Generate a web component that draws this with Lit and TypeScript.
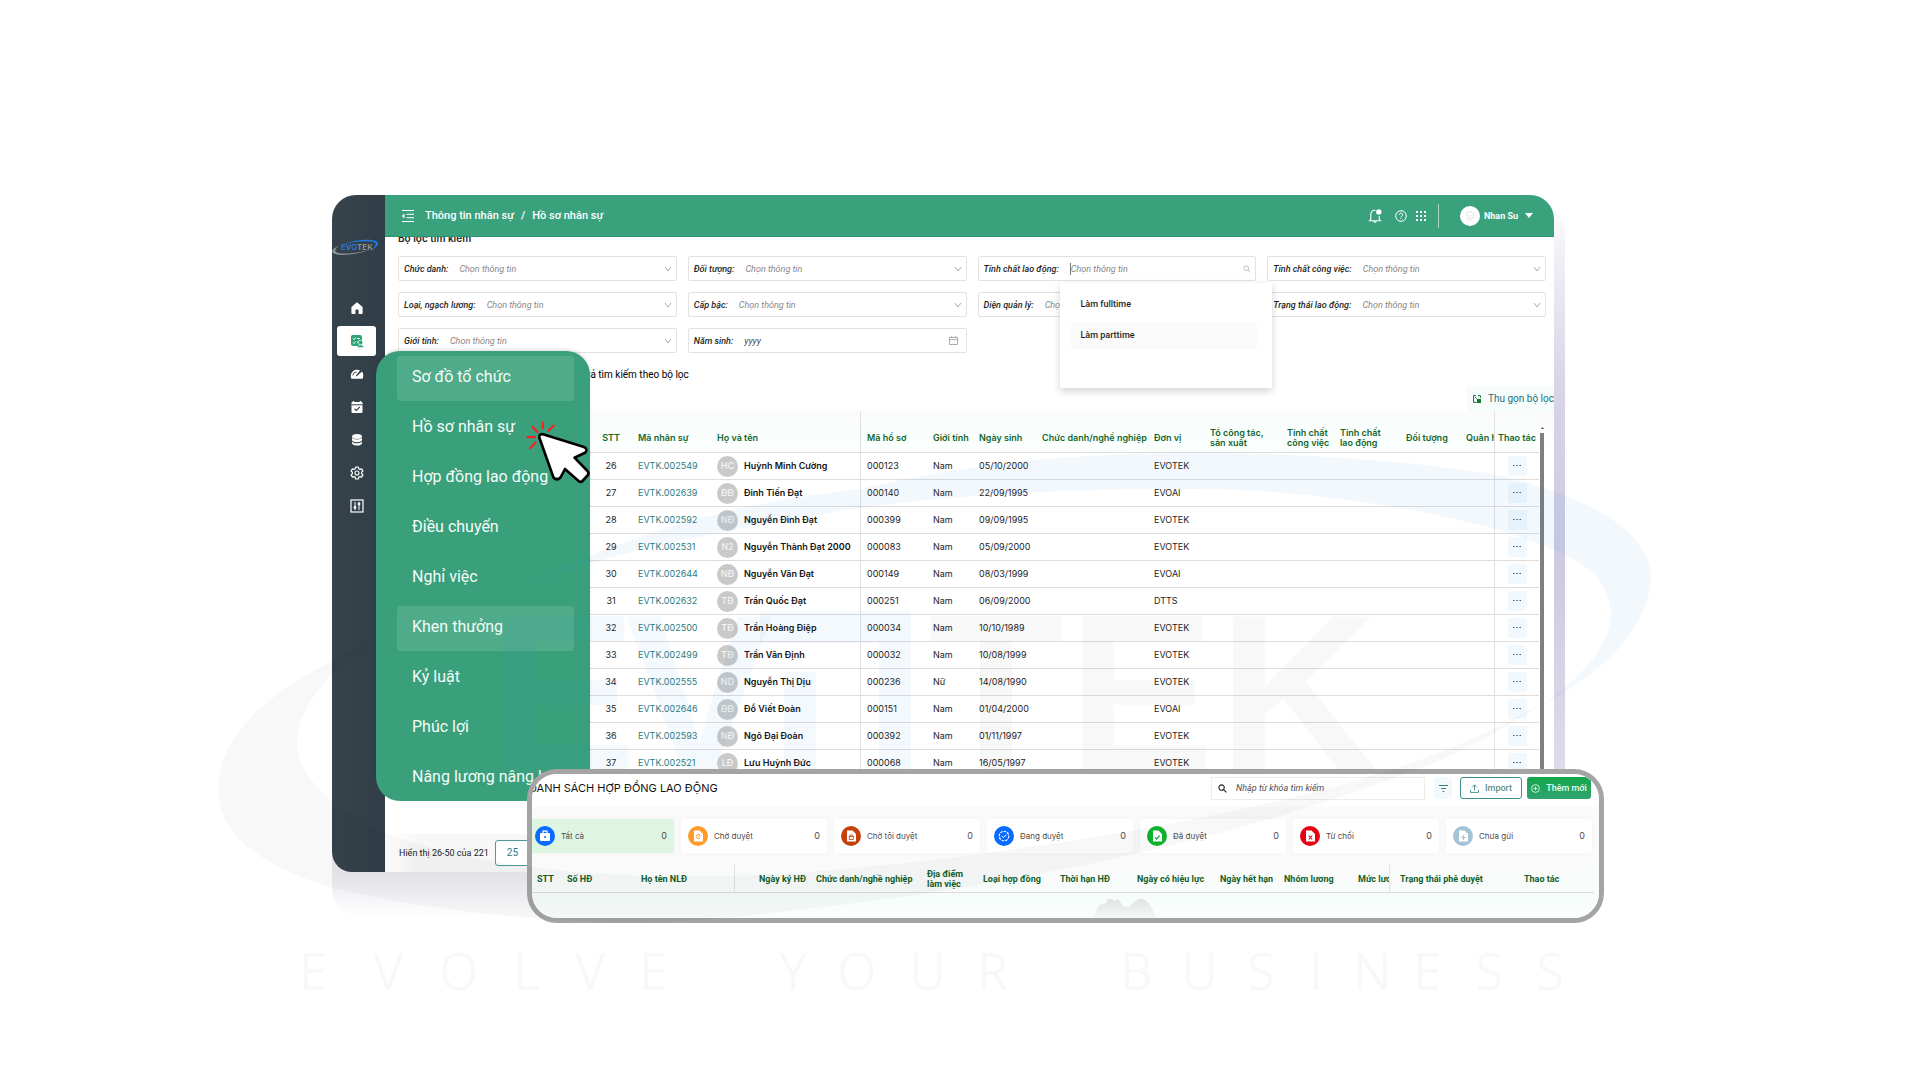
import { LitElement, html, svg, css, nothing, TemplateResult } from "lit";
import { customElement } from "lit/decorators.js";
import { classMap } from "lit/directives/class-map.js";

interface Employee {
  no: number;
  code: string;
  initials: string;
  name: string;
  file: string;
  sex: string;
  born: string;
  unit: string;
}

const EMPLOYEES: Employee[] = [
  { no: 26, code: "EVTK.002549", initials: "HC", name: "Huỳnh Minh Cường", file: "000123", sex: "Nam", born: "05/10/2000", unit: "EVOTEK" },
  { no: 27, code: "EVTK.002639", initials: "ĐĐ", name: "Đinh Tiến Đạt", file: "000140", sex: "Nam", born: "22/09/1995", unit: "EVOAI" },
  { no: 28, code: "EVTK.002592", initials: "NĐ", name: "Nguyễn Đình Đạt", file: "000399", sex: "Nam", born: "09/09/1995", unit: "EVOTEK" },
  { no: 29, code: "EVTK.002531", initials: "N2", name: "Nguyễn Thành Đạt 2000", file: "000083", sex: "Nam", born: "05/09/2000", unit: "EVOTEK" },
  { no: 30, code: "EVTK.002644", initials: "NĐ", name: "Nguyễn Văn Đạt", file: "000149", sex: "Nam", born: "08/03/1999", unit: "EVOAI" },
  { no: 31, code: "EVTK.002632", initials: "TĐ", name: "Trần Quốc Đạt", file: "000251", sex: "Nam", born: "06/09/2000", unit: "DTTS" },
  { no: 32, code: "EVTK.002500", initials: "TĐ", name: "Trần Hoàng Điệp", file: "000034", sex: "Nam", born: "10/10/1989", unit: "EVOTEK" },
  { no: 33, code: "EVTK.002499", initials: "TĐ", name: "Trần Văn Định", file: "000032", sex: "Nam", born: "10/08/1999", unit: "EVOTEK" },
  { no: 34, code: "EVTK.002555", initials: "ND", name: "Nguyễn Thị Dịu", file: "000236", sex: "Nữ", born: "14/08/1990", unit: "EVOTEK" },
  { no: 35, code: "EVTK.002646", initials: "ĐĐ", name: "Đỗ Viết Đoàn", file: "000151", sex: "Nam", born: "01/04/2000", unit: "EVOAI" },
  { no: 36, code: "EVTK.002593", initials: "NĐ", name: "Ngô Đại Đoàn", file: "000392", sex: "Nam", born: "01/11/1997", unit: "EVOTEK" },
  { no: 37, code: "EVTK.002521", initials: "LĐ", name: "Lưu Huỳnh Đức", file: "000068", sex: "Nam", born: "16/05/1997", unit: "EVOTEK" },
];

/* ---------- icons ---------- */

const chevron = html`<svg class="chev" viewBox="0 0 8 8" aria-hidden="true"><path d="M1 2l3 4 3-4" fill="none" stroke="#a9a9a9" stroke-width="1"/></svg>`;
const lens = (color: string, w: number) => html`<svg class="lens" viewBox="0 0 10 10" aria-hidden="true"><circle cx="4" cy="4" r="3" fill="none" stroke=${color} stroke-width=${w}/><path d="M6.3 6.3L9.3 9.3" stroke=${color} stroke-width=${w}/></svg>`;

const ICONS: Record<string, TemplateResult> = {
  home: svg`<path d="M7 1.2L1.4 6v6.2c0 .5.3.8.8.8H5.400V9.300c0-.4.3-.7.7-.7h1.800c.4 0 .7.3.7.7V13h3.200c.5 0 .8-.3.8-.8V6z" fill="#fff"/>`,
  gauge: svg`<path d="M1 11a6 6 0 0 1-.2-2C1 5.500 3.600 2.800 7 2.800c1.200 0 2 .2 3 .7L6.200 8.300 5.600 9.600 7 9l5-4.500c.9 1.200 1.300 2.700 1.200 4.300L13 11q-.2.800-1 .800H2Q1.200 11.800 1 11z" fill="#fff"/><path d="M2.800 8.500a4 4 0 0 1 4-3.600M12.600 2.600L7 8" fill="none" stroke="#344047" stroke-width=".9"/>`,
  calendar: svg`<path d="M3.500 1v2M10.500 1v2" stroke="#fff" stroke-width="1.400"/><rect x="1.500" y="2" width="11" height="11" rx="1" fill="#fff"/><path d="M1.500 4.800h11" stroke="#344047"/><path d="M4.500 8.700l2 1.800 3.200-3.600" fill="none" stroke="#344047" stroke-width="1.200"/>`,
  stack: svg`<ellipse cx="7" cy="3.500" rx="5" ry="2.500" fill="#fff"/><path d="M2 4.800c1 2.200 9 2.200 10 0v2.400c-1 2.600-9 2.600-10 0zM2 8.400c1 2.400 9 2.400 10 0v1.800c-.6 3.200-9.400 3.200-10 0z" fill="#fff"/>`,
  gear: svg`<path d="M5.700 1h2.600l.4 1.700 1.200.7 1.700-.5 1.300 2.200-1.300 1.200v1.400l1.300 1.200-1.300 2.200-1.700-.5-1.200.7L8.300 13H5.700l-.4-1.700-1.200-.7-1.700.5L1.100 8.900l1.300-1.200V6.300L1.100 5.100l1.300-2.200 1.700.5 1.200-.7z" fill="none" stroke="#fff" stroke-width="1.200" stroke-linejoin="round"/><circle cx="7" cy="7" r="2" fill="none" stroke="#fff" stroke-width="1.100"/>`,
  sliders: svg`<rect x="1" y="1" width="12" height="12" fill="none" stroke="#fff" stroke-width="1.200"/><path d="M5 3v8M9 3v8" stroke="#fff" stroke-width="1"/><circle cx="5" cy="8.500" r="1.400" fill="#fff"/><circle cx="9" cy="5" r="1.400" fill="#fff"/>`,
};

const activeIcon = html`<svg class="ico" viewBox="0 0 14 14" aria-hidden="true"><rect x="1" y="1" width="11" height="11" rx="2" fill="#2fa377"/><path d="M3 4.500l1 1 1.500-2M3 8.500l1 1 1.500-2M7 4.500h3M7 8h1.500" fill="none" stroke="#fff" stroke-width="1"/><circle cx="10.600" cy="8.500" r="2.300" fill="#2fa377" stroke="#fff" stroke-width=".7"/><path d="M7.400 13.500c0-3.200 6.400-3.200 6.400 0z" fill="#2fa377" stroke="#fff" stroke-width=".5"/></svg>`;

const doc = svg`<path d="M6 4.500h5.500L15 8v7.500H6z" fill="#fff"/>`;
const STATUS_ICONS: Record<string, TemplateResult> = {
  bag: svg`<rect x="5" y="7" width="10" height="8" rx="1" fill="#fff"/><path d="M8 7V5.200h4V7" fill="none" stroke="#fff" stroke-width="1.200"/><circle cx="10" cy="11" r="1" fill="#0a6cff"/>`,
  wait: svg`${doc}<path d="M12 8.800a2.200 2.200 0 1 0 .2 3M10.200 11l2-2.200" fill="none" stroke="#ff9b2b" stroke-width="1"/>`,
  mine: svg`${doc}<rect x="8.300" y="10.500" width="4" height="3" fill="none" stroke="#c4410a" stroke-width=".8"/><path d="M9 10.300V9h2.600v1.300" fill="none" stroke="#c4410a" stroke-width=".8"/>`,
  running: svg`<circle cx="10" cy="10" r="4.800" fill="none" stroke="#fff" stroke-width="1.100" stroke-dasharray="2.600 1"/><path d="M7.800 10l1.600 1.600 2.900-3" fill="none" stroke="#fff" stroke-width="1"/>`,
  done: svg`${doc}<path d="M8 11.300l1.700 1.700 3-3.400" fill="none" stroke="#0fb52f" stroke-width="1.200"/>`,
  refused: svg`${doc}<path d="M8.800 9.500l3.400 4M12.200 9.500l-3.400 4" fill="none" stroke="#e60012" stroke-width="1.100"/>`,
  draft: svg`${doc}<path d="M10.500 9v5M8 11.500h5" fill="none" stroke="#a5c3d6" stroke-width="1.100"/>`,
};

@customElement("side-rail")
class SideRail extends LitElement {
  static styles = css`
    :host { display: block; background: linear-gradient(90deg, #37434b, #313e47); }
    .logo { display: block; width: 48px; height: 20px; margin: 44px 0 34px 0; }
    .rail { display: flex; flex-direction: column; align-items: center; gap: 3px; padding-right: 4px; }
    .link { display: flex; align-items: center; justify-content: center; width: 39px; height: 30px; border-radius: 3px; }
    .link.active { background: #fff; }
    .ico { width: 14px; height: 14px; }
    .word { font: 500 8px "Inter", sans-serif; }
  `;
  render() {
    return html`
      <svg class="logo" viewBox="0 0 48 20" role="img" aria-label="EVOTEK">
        <path d="M12 5C24 0 45-1 46 4c.5 3-4 6-8 7.500C43 8 45 5.500 43 3.800 39 1 22 2.500 12 5z" fill="#1d7be8"/>
        <path d="M7 7C1 9-1 12 1 14c5 4 26 1 36-3C27 14 8 16 4 13 2 11 4 9 7 7z" fill="#8b959b"/>
        <text class="word" x="9" y="11"><tspan fill="#2f7df0">EVO</tspan><tspan fill="#99a2a7">TEK</tspan></text>
      </svg>
      <nav class="rail">
        <a class="link" href="#home" aria-label="Trang chủ"><svg class="ico" viewBox="0 0 14 14">${ICONS.home}</svg></a>
        <a class="link active" href="#people" aria-label="Nhân sự">${activeIcon}</a>
        ${["gauge", "calendar", "stack", "gear", "sliders"].map(
          (k) => html`<a class="link" href="#${k}" aria-label=${k}><svg class="ico" viewBox="0 0 14 14">${ICONS[k]}</svg></a>`
        )}
      </nav>
    `;
  }
}

@customElement("top-bar")
class TopBar extends LitElement {
  static styles = css`
    :host { display: flex; align-items: center; height: 41px; padding: 0 21px 0 16px; background: #3aa17d; border-bottom: 1px solid #2b946e; color: #fff; font: 500 11px/14px "Roboto", sans-serif; }
    button { display: flex; align-items: center; padding: 0; border: 0; background: none; color: inherit; font: inherit; }
    a { color: inherit; text-decoration: none; }
    .crumbs { display: flex; gap: 7px; margin: 0 auto 0 10px; }
    .fold { width: 14px; height: 14px; }
    .tools { display: flex; align-items: center; gap: 8px; }
    .bell { width: 16px; height: 16px; margin-right: 4px; }
    .help { width: 12px; height: 12px; }
    .apps { width: 12px; height: 12px; }
    .rule { width: 1px; height: 24px; margin: 0 13px 0 3px; background: #a9d8c6; }
    .user { gap: 4px; font: 700 9px/14px "Roboto", sans-serif; }
    .face { width: 20px; height: 20px; }
    .caret { width: 8px; height: 5px; margin-left: 3px; }
  `;
  render() {
    return html`
      <button aria-label="Thu gọn menu">
        <svg class="fold" viewBox="0 0 14 14"><path d="M1 1.500h12M5.500 5.200H13M5.500 8.800H13M1 12.500h12" stroke="#fff" stroke-width="1.100"/><path d="M3.500 4.500v5L.8 7z" fill="#fff"/></svg>
      </button>
      <nav class="crumbs"><a href="#people">Thông tin nhân sự</a><span>/</span><a href="#profiles">Hồ sơ nhân sự</a></nav>
      <div class="tools">
        <button aria-label="Thông báo"><svg class="bell" viewBox="0 0 16 16"><path d="M8.500 2.200C5.200 2 3.800 4.200 3.800 6.500v4.800L2.500 12.800h11l-1.300-1.500V8M6.800 13.300c.2 1.300 2.200 1.300 2.400 0" fill="none" stroke="#fff" stroke-width="1.100"/><circle cx="11.800" cy="4" r="2.700" fill="#fff"/></svg></button>
        <button aria-label="Trợ giúp"><svg class="help" viewBox="0 0 12 12"><circle cx="6" cy="6" r="5.300" fill="none" stroke="#fff"/><path d="M4.300 4.800c0-2.200 3.400-2.200 3.400 0 0 1.200-1.700 1.200-1.700 2.500M6 8.200v1" fill="none" stroke="#fff"/></svg></button>
        <button aria-label="Ứng dụng"><svg class="apps" viewBox="0 0 12 12">${[1, 5, 9].map((y) => [1, 5, 9].map((x) => svg`<rect x=${x} y=${y} width="2" height="2" fill="#fff"/>`))}</svg></button>
        <span class="rule"></span>
        <button class="user">
          <svg class="face" viewBox="0 0 20 20"><circle cx="10" cy="10" r="10" fill="#fff"/><rect x="6.500" y="6" width="7" height="6" rx="1.500" fill="none" stroke="#ddd" stroke-width=".8"/><path d="M8 9l2 1.500L12 9M7 14h6" fill="none" stroke="#ddd" stroke-width=".8"/></svg>
          Nhan Su
          <svg class="caret" viewBox="0 0 8 5"><path d="M0 0h8L4 5z" fill="#fff"/></svg>
        </button>
      </div>
    `;
  }
}

@customElement("filter-panel")
class FilterPanel extends LitElement {
  static styles = css`
    :host { display: block; font: 400 9px/12px "Roboto", sans-serif; color: #1f1f1f; }
    .title { margin: 0 0 12px; font: 600 10px/12px "Inter", sans-serif; }
    .grid { display: grid; grid-template-columns: repeat(4, 1fr); gap: 11px; }
    .field { position: relative; display: flex; align-items: center; height: 25px; box-sizing: border-box; padding: 0 4px 0 5px; border: 1px solid #e3e1e1; border-radius: 2px; background: #fff; font-style: italic; }
    label { flex: none; margin-right: 11px; font-weight: 500; }
    select, .field input { flex: 1; min-width: 0; padding: 0; border: 0; outline: 0; background: none; appearance: none; font: italic 400 9px/12px "Roboto", sans-serif; color: #8b8585; }
    .field input::placeholder { color: #8b8585; opacity: 1; }
    .field input.year::placeholder { color: #4d4848; }
    .focused input { border-left: 1px solid #777; }
    .chev { flex: none; width: 8px; height: 8px; }
    .lens { flex: none; width: 8px; height: 8px; }
    .cal { flex: none; width: 9px; height: 9px; margin-right: 4px; }
    .popup { position: absolute; z-index: 2; left: 81px; top: 26px; width: 212px; height: 105px; box-sizing: border-box; padding: 8px 15px 0 11px; background: #fff; box-shadow: 0 3px 8px rgba(0, 0, 0, 0.18); font-style: normal; font-weight: 500; }
    .popup ul { display: grid; gap: 4px; margin: 0; padding: 0; list-style: none; }
    .popup li { padding: 8px 10px; line-height: 11px; border-radius: 2px; }
    .popup .hover { background: #fafafa; }
  `;
  private pick(label: string, id: string) {
    return html`<div class="field"><label for=${id}>${label}:</label><select id=${id}><option>Chọn thông tin</option></select>${chevron}</div>`;
  }
  render() {
    return html`
      <h2 class="title">Bộ lọc tìm kiếm</h2>
      <div class="grid">
        ${this.pick("Chức danh", "title")} ${this.pick("Đối tượng", "target")}
        <div class="field focused">
          <label for="nature">Tính chất lao động:</label>
          <input id="nature" placeholder="Chọn thông tin" />${lens("#aaa", 0.9)}
          <div class="popup"><ul role="listbox"><li role="option">Làm fulltime</li><li class="hover" role="option">Làm parttime</li></ul></div>
        </div>
        ${this.pick("Tính chất công việc", "work")} ${this.pick("Loại, ngạch lương", "pay")}
        ${this.pick("Cấp bậc", "level")} ${this.pick("Diện quản lý", "scope")}
        ${this.pick("Trạng thái lao động", "state")} ${this.pick("Giới tính", "sex")}
        <div class="field">
          <label for="year">Năm sinh:</label><input id="year" class="year" placeholder="yyyy" />
          <svg class="cal" viewBox="0 0 9 9"><path d="M.5 1.500h8v7h-8zM.5 3.700h8M2.700 0v2M6.300 0v2" fill="none" stroke="#a9a2a2" stroke-width=".9"/></svg>
        </div>
      </div>
    `;
  }
}

@customElement("employee-table")
class EmployeeTable extends LitElement {
  static styles = css`
    :host { display: flex; gap: 1px; font: 400 9px/10px "Inter", sans-serif; color: #262222; }
    table { flex: 1; width: 100%; table-layout: fixed; border-collapse: separate; border-spacing: 0; }
    th, td { box-sizing: border-box; padding: 0 0 0 6px; text-align: left; white-space: nowrap; border-bottom: 1px solid #dfdcdc; }
    th { height: 42px; padding-top: 13px; font-weight: 600; color: #12672b; background: linear-gradient(#fbfbfb, #f9fefd 50%, #fbfffe); }
    td { height: 27px; }
    .c { text-align: center; padding-left: 0; }
    .pin { border-right: 1px solid #e2e0e0; overflow: hidden; }
    .code { color: #2b7b83; text-decoration: none; }
    .person { display: flex; align-items: center; gap: 6px; font-weight: 600; color: #141414; }
    .avatar { display: flex; align-items: center; justify-content: center; flex: none; width: 21px; height: 21px; border-radius: 50%; background: #c9c9c9; color: #f4f4f4; font-weight: 500; }
    .more { display: inline-flex; align-items: center; justify-content: center; width: 19px; height: 20px; padding: 0; border: 0; border-radius: 2px; background: #f1f9fe; color: #2e5560; }
    .dots { width: 8px; height: 2px; }
    .w1 { width: 42px; } .w2 { width: 79px; } .w3 { width: 150px; } .w4 { width: 66px; } .w5 { width: 46px; }
    .w6 { width: 63px; } .w7 { width: 112px; } .w8 { width: 56px; } .w9 { width: 77px; } .w10 { width: 53px; }
    .w11 { width: 66px; } .w12 { width: 60px; } .w13 { width: 35px; } .w14 { width: 44px; }
    .bar { display: flex; flex-direction: column; align-items: center; width: 4px; padding-top: 16px; }
    .up { width: 3px; height: 2px; margin-bottom: 4px; }
    .thumb { flex: 1; width: 4px; background: #7f7f7f; }
  `;
  render() {
    return html`
      <table>
        <thead>
          <tr>
            <th class="w1 c">STT</th><th class="w2">Mã nhân sự</th><th class="w3 pin">Họ và tên</th>
            <th class="w4">Mã hồ sơ</th><th class="w5">Giới tính</th><th class="w6">Ngày sinh</th>
            <th class="w7">Chức danh/nghề nghiệp</th><th class="w8">Đơn vị</th><th class="w9">Tổ công tác,<br />sản xuất</th>
            <th class="w10">Tính chất<br />công việc</th><th class="w11">Tính chất<br />lao động</th><th class="w12">Đối tượng</th>
            <th class="w13 pin">Quân hàm</th><th class="w14 c">Thao tác</th>
          </tr>
        </thead>
        <tbody>
          ${EMPLOYEES.map(
            (e) => html`<tr>
              <td class="c">${e.no}</td>
              <td><a class="code" href="#${e.code}">${e.code}</a></td>
              <td class="pin"><span class="person"><span class="avatar">${e.initials}</span>${e.name}</span></td>
              <td>${e.file}</td><td>${e.sex}</td><td>${e.born}</td><td></td><td>${e.unit}</td>
              <td></td><td></td><td></td><td></td><td class="pin"></td>
              <td class="c"><button class="more" aria-label="Thao tác"><svg class="dots" viewBox="0 0 8 2"><path d="M0 .5h1.500M3.300.5h1.500M6.500.5H8" stroke="#39616a" stroke-width="1.200"/></svg></button></td>
            </tr>`
          )}
        </tbody>
      </table>
      <div class="bar"><svg class="up" viewBox="0 0 3 2"><path d="M0 2L1.500 0 3 2z" fill="#555"/></svg><span class="thumb"></span></div>
    `;
  }
}

@customElement("personnel-window")
class PersonnelWindow extends LitElement {
  static styles = css`
    :host { position: relative; display: block; font: 400 10px/12px "Roboto", sans-serif; color: #1c1c1c; }
    .halo { position: absolute; inset: 10px -11px -45px 0; border-radius: 28px; background: linear-gradient(#fdfdfd, #efedf5 8%, #d8d5e7 25%, #cdcae1 50%, #dddbe9 78%, #e9e9ee 94%, #fff); }
    .window { position: relative; display: grid; grid-template-columns: 53px 1fr; border-radius: 24px 24px 0 20px; overflow: hidden; background: #fff; }
    .body { min-width: 0; overflow: hidden; }
    .filters { display: block; margin: -5px 8px 16px 13px; }
    .result { margin: 0 0 5px 177px; color: #000; }
    .tools { display: flex; justify-content: flex-end; }
    .collapse { display: flex; align-items: center; gap: 7px; height: 25px; padding: 0 0 0 6px; border: 0; background: #f6fcfc; color: #1d7075; font: 400 10px/12px "Roboto", sans-serif; white-space: nowrap; }
    .shrink { width: 8px; height: 8px; }
    .list { padding: 0 10px 0 205px; background: linear-gradient(#fafafa, #fff 42px); }
    .pager { display: flex; align-items: center; gap: 6px; height: 38px; margin: 57px 0 0 14px; background: linear-gradient(90deg, #fdfdfd, #f7f7f7 20px); font-size: 9px; }
    .size { width: 66px; height: 26px; padding: 0 11px; appearance: none; border: 1px solid #4f9a9c; border-radius: 3px; background: #fff; color: #2b7b83; font: 400 10px/12px "Roboto", sans-serif; }
  `;
  render() {
    return html`
      <div class="halo"></div>
      <div class="window">
        <side-rail></side-rail>
        <div>
          <top-bar></top-bar>
          <div class="body">
            <filter-panel class="filters"></filter-panel>
            <p class="result">Kết quả tìm kiếm theo bộ lọc</p>
            <div class="tools">
              <button class="collapse">
                <svg class="shrink" viewBox="0 0 8 8"><path d="M3 .6H.6V7.400h3M5 .6h2.400V3" fill="none" stroke="#0f6b3a" stroke-width="1"/><path d="M4 4h4v4H4z" fill="#0f7a2a"/><path d="M2 2l2 2" stroke="#0f6b3a" stroke-width=".8"/></svg>Thu gọn bộ lọc
              </button>
            </div>
            <div class="list"><employee-table></employee-table></div>
            <div class="pager"><label for="size">Hiển thị 26-50 của 221</label><select class="size" id="size"><option>25</option></select></div>
          </div>
        </div>
      </div>
    `;
  }
}

const MENU = [
  { text: "Sơ đồ tổ chức", lit: true },
  { text: "Hồ sơ nhân sự" },
  { text: "Hợp đồng lao động" },
  { text: "Điều chuyển" },
  { text: "Nghỉ việc" },
  { text: "Khen thưởng", lit: true },
  { text: "Kỷ luật" },
  { text: "Phúc lợi" },
  { text: "Nâng lương nâng bậc" },
];

@customElement("people-menu")
class PeopleMenu extends LitElement {
  static styles = css`
    :host { display: block; box-sizing: border-box; padding: 5px 16px 0 21px; border-radius: 24px; background: #3aa07c; box-shadow: 0 -2px 3px rgba(0, 0, 0, 0.1); overflow: hidden; font: 400 16px/20px "Roboto", sans-serif; }
    nav { display: grid; gap: 5px; }
    a { display: flex; align-items: center; height: 45px; box-sizing: border-box; padding: 0 0 3px 15px; border-radius: 3px; color: #f4fcf8; text-decoration: none; white-space: nowrap; }
    .lit { background: #4fab89; }
  `;
  render() {
    return html`<nav>${MENU.map((m) => html`<a class=${classMap({ lit: !!m.lit })} href="#menu">${m.text}</a>`)}</nav>`;
  }
}

const STATUSES = [
  { text: "Tất cả", icon: "bag", tone: "blue", on: true },
  { text: "Chờ duyệt", icon: "wait", tone: "orange" },
  { text: "Chờ tôi duyệt", icon: "mine", tone: "rust" },
  { text: "Đang duyệt", icon: "running", tone: "blue" },
  { text: "Đã duyệt", icon: "done", tone: "green" },
  { text: "Từ chối", icon: "refused", tone: "red" },
  { text: "Chưa gửi", icon: "draft", tone: "pale" },
];

@customElement("contract-window")
class ContractWindow extends LitElement {
  static styles = css`
    :host { display: block; box-sizing: border-box; border: 5px solid #a4a4a4; border-radius: 30px; overflow: hidden; background: #fafafa; font: 400 9px/10px "Roboto", sans-serif; color: #333; }
    .head { display: flex; align-items: center; height: 33px; box-sizing: border-box; padding: 0 8px 5px 0; background: #fff; }
    .title { margin: 0 auto 0 -3px; font: 400 11px/14px "Inter", sans-serif; color: #111; white-space: nowrap; }
    .search { display: flex; align-items: center; gap: 9px; width: 214px; height: 23px; box-sizing: border-box; padding: 0 6px; border: 1px solid #ededed; }
    .lens { width: 9px; height: 9px; flex: none; }
    input { flex: 1; min-width: 0; padding: 0; border: 0; background: none; font: italic 400 9px/10px "Roboto", sans-serif; }
    input::placeholder { color: #4d4d55; opacity: 1; }
    button { display: flex; align-items: center; justify-content: center; height: 22px; box-sizing: border-box; border: 0; border-radius: 3px; font: 500 9px/10px "Roboto", sans-serif; white-space: nowrap; padding: 0; }
    .filter { width: 18px; margin: 0 8px 0 9px; background: #f1f9fd; }
    .import { gap: 6px; width: 62px; margin-right: 5px; border: 1px solid #3f8f90; background: #fff; color: #5a8f8d; }
    .add { gap: 6px; width: 64px; background: linear-gradient(#12a74c, #30a36e); color: #e8fff2; }
    .i10 { width: 9px; height: 9px; flex: none; }
    .cards { display: grid; grid-template-columns: repeat(7, 1fr); gap: 7px; margin: 12px 7px 12px -4px; }
    .card { display: flex; align-items: center; gap: 6px; height: 34px; box-sizing: border-box; padding: 0 7px; border-radius: 2px; background: #fff; box-shadow: 0 0 4px rgba(0, 0, 0, 0.03); font: 400 8px/10px "Inter", sans-serif; color: #514b4b; }
    .card.on { background: #def5e2; }
    .count { margin-left: auto; font-size: 9px; }
    .dot { width: 20px; height: 20px; border-radius: 50%; }
    .blue { background: #0a6cff; } .orange { background: #ff9b2b; } .rust { background: #c4410a; }
    .green { background: #0fb52f; } .red { background: #e60012; } .pale { background: #a5c3d6; }
    table { width: 100%; table-layout: fixed; border-collapse: separate; border-spacing: 0; }
    .grid { padding-right: 5px; background: #f9fefd; }
    th { height: 28px; box-sizing: border-box; padding: 0 0 0 5px; overflow: hidden; text-align: left; white-space: nowrap; font-weight: 700; color: #12602b; border-bottom: 1px solid #dedada; background: linear-gradient(#fafafa, #f6fcfa); }
    .pin { border-right: 1px solid #dfe0e0; }
    .w1 { width: 30px; } .w2 { width: 74px; } .w3 { width: 99px; } .w4 { width: 76px; } .w5 { width: 111px; }
    .w6 { width: 56px; } .w7 { width: 77px; } .w8 { width: 77px; } .w9 { width: 83px; } .w10 { width: 64px; }
    .w11 { width: 74px; } .w12 { width: 37px; } .w13 { width: 129px; } .w14 { width: 75px; }
    th.w4 { padding-left: 24px; } th.w13 { padding-left: 10px; }
    .empty { display: flex; justify-content: center; align-items: flex-end; height: 25px; padding-left: 118px; background: linear-gradient(#f5fcfa, #fbfffe); }
    .hill { width: 64px; height: 19px; }
  `;
  render() {
    return html`
      <div class="head">
        <h2 class="title">DANH SÁCH HỢP ĐỒNG LAO ĐỘNG</h2>
        <div class="search">${lens("#222", 1.2)}<input aria-label="Tìm kiếm" placeholder="Nhập từ khóa tìm kiếm" /></div>
        <button class="filter" aria-label="Lọc"><svg class="i10" viewBox="0 0 9 9"><path d="M0 1.500h9M2 4.500h5M3.700 7.500h1.600" stroke="#3d7e76" stroke-width="1"/></svg></button>
        <button class="import"><svg class="i10" viewBox="0 0 9 9"><path d="M.5 6v2.400h8V6M4.500 6.500V1M2.500 2.800l2-2 2 2" fill="none" stroke="#4f9492" stroke-width="1"/></svg>Import</button>
        <button class="add"><svg class="i10" viewBox="0 0 9 9"><circle cx="4.500" cy="4.500" r="3.900" fill="none" stroke="#d8f5e4" stroke-width=".9"/><path d="M4.500 2.700v3.600M2.700 4.500h3.600" stroke="#d8f5e4"/></svg>Thêm mới</button>
      </div>
      <div class="cards">
        ${STATUSES.map(
          (s) => html`<div class=${classMap({ card: true, on: !!s.on })}>
            <svg class="dot ${s.tone}" viewBox="0 0 20 20" aria-hidden="true">${STATUS_ICONS[s.icon] ?? nothing}</svg>
            <span>${s.text}</span><span class="count">0</span>
          </div>`
        )}
      </div>
      <div class="grid">
        <table>
          <thead>
            <tr>
              <th class="w1">STT</th><th class="w2">Số HĐ</th><th class="w3 pin">Họ tên NLĐ</th><th class="w4">Ngày ký HĐ</th>
              <th class="w5">Chức danh/nghề nghiệp</th><th class="w6">Địa điểm<br />làm việc</th><th class="w7">Loại hợp đồng</th>
              <th class="w8">Thời hạn HĐ</th><th class="w9">Ngày có hiệu lực</th><th class="w10">Ngày hết hạn</th>
              <th class="w11">Nhóm lương</th><th class="w12 pin">Mức lương</th><th class="w13">Trạng thái phê duyệt</th><th class="w14">Thao tác</th>
            </tr>
          </thead>
        </table>
      </div>
      <div class="empty"><svg class="hill" viewBox="0 0 64 19"><defs><linearGradient id="fog" x1="0" y1="0" x2="0" y2="1"><stop offset="0" stop-color="#e0e4e4"/><stop offset="1" stop-color="#f2f8f7"/></linearGradient></defs><path d="M0 19L6 6l7-2 2-4h4l2 2 4-2 5 7 7 1q5-8 11-8t10 8l6 11z" fill="url(#fog)"/></svg></div>
    `;
  }
}

@customElement("brand-watermark")
class BrandWatermark extends LitElement {
  static styles = css`
    :host { display: block; }
    svg { display: block; width: 100%; }
    .mark { font: 700 222px "Liberation Sans", sans-serif; }
    .motto { font: 400 51px "Open Sans", sans-serif; }
  `;
  render() {
    return html`
      <svg viewBox="0 0 1920 1080" aria-hidden="true">
        <g fill="#2f86d6" fill-opacity=".06">
          <path d="M530 584C647 524 760 500 860 489C1000 456 1110 453 1215 453C1320 454 1420 462 1497 475C1600 500 1651 535 1651 579C1648 630 1600 675 1542 705C1590 672 1611 640 1611 612C1608 585 1595 570 1565 555C1490 518 1330 490 1200 489C1060 488 950 496 860 508C740 528 620 548 530 584Z"/>
        </g>
        <path fill="#000" fill-opacity=".027" d="M377 641C290 676 218 725 218 790C218 850 300 885 380 898C520 924 640 926 727 918C860 904 960 890 1027 876C1200 845 1340 800 1432 764C1475 745 1512 725 1542 703C1490 732 1440 755 1383 772C1300 800 1140 832 1027 847C960 858 800 876 713 876C560 880 430 855 370 826C330 805 297 775 297 741C300 705 330 668 377 641Z"/>
        <text class="mark" y="770" fill="#2f86d6" fill-opacity=".05"><tspan x="489">E</tspan><tspan x="625">V</tspan></text>
        <path d="M760 627H895V770M800 672V770" fill="none" stroke="#2f86d6" stroke-opacity=".05" stroke-width="32"/>
        <text class="mark" x="928 1067 1218" y="770" fill="#000" fill-opacity=".027">TEK</text>
        <text class="motto" x="299 373 439 513 575 639 779 837 909 977 1120 1181 1247 1309 1353 1413 1475 1536" y="990" fill="#000" fill-opacity=".027">EVOLVEYOURBUSINESS</text>
      </svg>
    `;
  }
}

@customElement("app-root")
class AppRoot extends LitElement {
  static styles = css`
    :host { display: block; }
    .stage { position: relative; box-sizing: border-box; min-height: 100vh; padding: 195px 366px 0 332px; overflow: hidden; background: #fff; }
    .menu { position: absolute; left: 376px; top: 351px; width: 214px; height: 450px; }
    .pointer { position: absolute; left: 524px; top: 420px; width: 68px; height: 66px; }
    .contracts { position: absolute; left: 527px; right: 316px; top: 769px; }
    .brand { position: absolute; inset: 0; pointer-events: none; }
  `;
  render() {
    return html`
      <main class="stage">
        <personnel-window></personnel-window>
        <people-menu class="menu"></people-menu>
        <svg class="pointer" viewBox="0 0 68 66" aria-hidden="true">
          <path d="M18.700 2.500v6M8.500 7l5 5M3.500 17.200h7.500M6.500 28l5-5.600M24.300 10.700l5.400-5" stroke="#ff1e1e" stroke-width="2.200" stroke-linecap="round"/>
          <path d="M15.300 17.500Q14.800 13.500 19 14.300L60 27Q64 29 61.500 32.500L50.500 37.700 63.500 51Q65.500 53.500 63.500 55.500L58 61.500Q56 62.500 54 60.500L41 49 36.500 57.500Q33 61 29.500 57.500Z" fill="#fff" stroke="#000" stroke-width="2.600" stroke-linejoin="round"/>
        </svg>
        <contract-window class="contracts"></contract-window>
        <brand-watermark class="brand"></brand-watermark>
      </main>
    `;
  }
}
